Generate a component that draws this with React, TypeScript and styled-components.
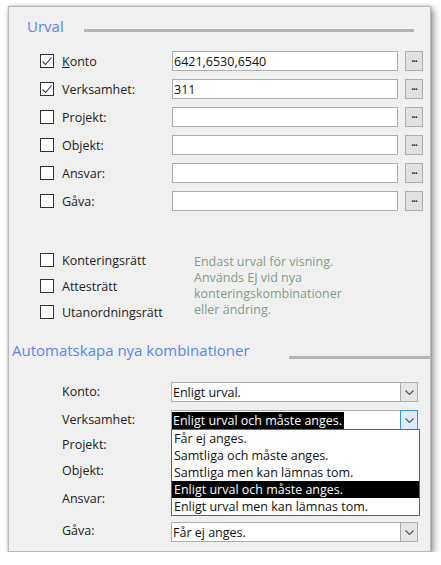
import React from 'react'
import styled, { createGlobalStyle } from 'styled-components'

const GlobalStyle = createGlobalStyle`
  body {
    margin: 0;
    background: #ffffff;
    font-family: "Open Sans", "Noto Sans", sans-serif;
  }
`

const filterFields = [
  { key: 'konto', label: 'Konto', accessKey: true, checked: true, value: '6421,6530,6540' },
  { key: 'verksamhet', label: 'Verksamhet:', checked: true, value: '311' },
  { key: 'projekt', label: 'Projekt:', checked: false, value: '' },
  { key: 'objekt', label: 'Objekt:', checked: false, value: '' },
  { key: 'ansvar', label: 'Ansvar:', checked: false, value: '' },
  { key: 'gava', label: 'Gåva:', checked: false, value: '' },
]

const rights = ['Konteringsrätt', 'Attesträtt', 'Utanordningsrätt']

// rows under the open list are covered by it, so their values are left empty
const comboRows = [
  { key: 'konto', label: 'Konto:', value: 'Enligt urval.', raise: 0 },
  { key: 'verksamhet', label: 'Verksamhet:', value: 'Enligt urval och måste anges.', raise: 0, open: true },
  { key: 'projekt', label: 'Projekt:', value: '', raise: 3 },
  { key: 'objekt', label: 'Objekt:', value: '', raise: 5 },
  { key: 'ansvar', label: 'Ansvar:', value: '', raise: 5 },
  { key: 'gava', label: 'Gåva:', value: 'Får ej anges.', raise: 1 },
]

const options = [
  'Får ej anges.',
  'Samtliga och måste anges.',
  'Samtliga men kan lämnas tom.',
  'Enligt urval och måste anges.',
  'Enligt urval men kan lämnas tom.',
]

const CheckBox: React.FC<{ checked?: boolean }> = ({ checked }) => (
  <Box>
    {checked && (
      <svg width="12" height="12" viewBox="0 0 12 12">
        <polyline points="1.5,6.5 4.5,9.5 10.5,2.5" fill="none" stroke="#333" strokeWidth="1.1" />
      </svg>
    )}
  </Box>
)

const Chevron = () => (
  <svg width="9" height="5" viewBox="0 0 9 5">
    <polyline points="0.5,0.5 4.5,4.5 8.5,0.5" fill="none" stroke="#555" strokeWidth="1.1" />
  </svg>
)

export default function App() {
  return (
    <>
      <GlobalStyle />
      <Panel>
        <Heading $indent={18} $inset={16} $top={9}>
          <HeadingText>Urval</HeadingText>
          <Rule $gap={20} $top={13} />
        </Heading>

        <FieldGrid>
          {filterFields.map((f) => (
            <React.Fragment key={f.key}>
              <CheckLabel>
                <CheckBox checked={f.checked} />
                <span>
                  {f.accessKey ? (
                    <>
                      <u>{f.label[0]}</u>
                      {f.label.slice(1)}
                    </>
                  ) : (
                    f.label
                  )}
                </span>
              </CheckLabel>
              <TextBox readOnly defaultValue={f.value} />
              <DotsButton>...</DotsButton>
            </React.Fragment>
          ))}
        </FieldGrid>

        <RightsSection>
          <RightsList>
            {rights.map((r) => (
              <RightsRow key={r}>
                <CheckBox />
                <span>{r}</span>
              </RightsRow>
            ))}
          </RightsList>
          <InfoText>
            Endast urval för visning.
            <br />
            Används EJ vid nya
            <br />
            konteringskombinationer
            <br />
            eller ändring.
          </InfoText>
        </RightsSection>

        <Heading $indent={3} $inset={0} $top={21}>
          <HeadingText>Automatskapa nya kombinationer</HeadingText>
          <Rule $gap={39} $top={16} />
        </Heading>

        <ComboGrid>
          {comboRows.map((c) => (
            <React.Fragment key={c.key}>
              <ComboLabel $raise={c.raise}>{c.label}</ComboLabel>
              <Combo>
                <ComboValue>
                  {c.open ? <Highlight>{c.value}</Highlight> : <Plain>{c.value}</Plain>}
                </ComboValue>
                <ArrowButton $active={!!c.open}>
                  <Chevron />
                </ArrowButton>
                {c.open && (
                  <DropList>
                    {options.map((o) => (
                      <DropItem key={o} $selected={o === c.value}>
                        {o}
                      </DropItem>
                    ))}
                  </DropList>
                )}
              </Combo>
            </React.Fragment>
          ))}
        </ComboGrid>
      </Panel>
    </>
  )
}

//* Styled components *//

const Panel = styled.div`
  box-sizing: border-box;
  margin: 6px 0 0 8px;
  width: 423px;
  height: 546px;
  background: #f0f0f0;
  border: 1px solid #b8b8b8;
  box-shadow: 3px 3px 7px rgba(0, 0, 0, 0.4), 0 0 3px rgba(0, 0, 0, 0.2);
  font-size: 12.5px;
  color: #222;
`

const Heading = styled.div<{ $indent: number; $inset: number; $top: number }>`
  display: flex;
  align-items: flex-start;
  margin-top: ${(p) => p.$top}px;
  padding: 0 ${(p) => p.$inset}px 0 ${(p) => p.$indent}px;
`

const HeadingText = styled.div`
  font-size: 15px;
  line-height: 20px;
  color: #5b83ee;
  white-space: nowrap;
`

const Rule = styled.div<{ $gap: number; $top: number }>`
  flex: 1;
  height: 3px;
  margin: ${(p) => p.$top}px 0 0 ${(p) => p.$gap}px;
  background: #b4b4b4;
`

const FieldGrid = styled.div`
  display: grid;
  grid-template-columns: 125px 226px 18px;
  grid-auto-rows: 20px;
  column-gap: 7px;
  row-gap: 8px;
  margin: 15px 0 0 31px;
`

const CheckLabel = styled.label`
  display: flex;
  align-items: center;
  gap: 8px;
  white-space: nowrap;
`

const Box = styled.span`
  box-sizing: border-box;
  display: inline-flex;
  align-items: center;
  justify-content: center;
  flex: none;
  width: 14px;
  height: 14px;
  border: 1px solid #333;
  background: #fff;
`

const TextBox = styled.input`
  box-sizing: border-box;
  width: 100%;
  height: 20px;
  margin: 0;
  padding: 0 1px;
  border: 1px solid #adadad;
  background: #fff;
  font: inherit;
  color: #111;
  outline: none;
`

const DotsButton = styled.button`
  box-sizing: border-box;
  width: 18px;
  height: 20px;
  margin: 0;
  padding: 0 0 4px;
  border: 1px solid #adadad;
  background: #e1e1e1;
  font-family: "Liberation Sans", sans-serif;
  font-size: 10px;
  font-weight: bold;
  letter-spacing: -1px;
  line-height: 10px;
  color: #333;
`

const RightsSection = styled.div`
  display: flex;
  align-items: flex-start;
  margin: 42px 0 0 31px;
`

const RightsList = styled.div`
  display: flex;
  flex-direction: column;
  gap: 12px;
  width: 154px;
`

const RightsRow = styled.label`
  display: flex;
  align-items: center;
  gap: 8px;
  height: 14px;
  white-space: nowrap;
`

const InfoText = styled.div`
  margin-top: 1px;
  line-height: 16px;
  color: #849c84;
`

const ComboGrid = styled.div`
  display: grid;
  grid-template-columns: 109px 247px;
  grid-auto-rows: 20px;
  row-gap: 8px;
  margin: 22px 0 0 53px;
`

const ComboLabel = styled.div<{ $raise: number }>`
  align-self: center;
  line-height: 20px;
  margin-top: ${(p) => -p.$raise * 2}px;
  white-space: nowrap;
`

const Combo = styled.div`
  position: relative;
  box-sizing: border-box;
  display: flex;
  height: 20px;
  border: 1px solid #adadad;
  background: #fff;
`

const ComboValue = styled.div`
  flex: 1;
  display: flex;
  align-items: center;
  min-width: 0;
  white-space: nowrap;
`

const Plain = styled.span`
  padding-left: 1px;
  color: #111;
`

const Highlight = styled.span`
  display: inline-block;
  padding: 0 2px 0 1px;
  line-height: 17px;
  background: #000;
  color: #fff;
`

const ArrowButton = styled.div<{ $active: boolean }>`
  box-sizing: border-box;
  display: flex;
  align-items: center;
  justify-content: center;
  width: 18px;
  margin: -1px -1px -1px 0;
  border: 1px solid ${(p) => (p.$active ? '#3d8fe0' : '#adadad')};
  background: ${(p) => (p.$active ? '#dcecfc' : '#e5e5e5')};
`

const DropList = styled.div`
  position: absolute;
  top: 100%;
  left: -1px;
  z-index: 2;
  box-sizing: border-box;
  width: 249px;
  border: 1px solid #646464;
  background: #fff;
`

const DropItem = styled.div<{ $selected: boolean }>`
  height: 17px;
  line-height: 17px;
  padding-left: 2px;
  white-space: nowrap;
  background: ${(p) => (p.$selected ? '#000' : 'transparent')};
  color: ${(p) => (p.$selected ? '#fff' : '#111')};
`
